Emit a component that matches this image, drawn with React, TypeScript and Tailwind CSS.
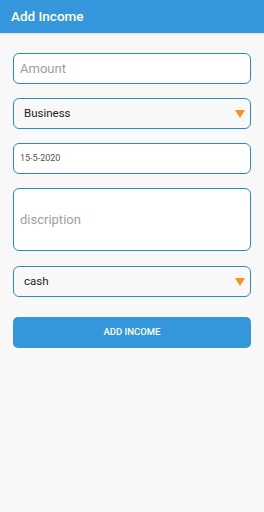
import React from "react";

function Triangle() {
  return (
    <svg width="10" height="8" viewBox="0 0 10 8" className="shrink-0">
      <polygon points="0,0 10,0 5,8" fill="#f7931e" />
    </svg>
  );
}

export default function App() {
  return (
    <div
      className="w-[264px] h-[512px] bg-[#f8f8f8] flex flex-col"
      style={{ fontFamily: "Roboto, 'Noto Sans', sans-serif" }}
    >
      <div className="h-[33px] bg-[#3497db] flex items-center px-[11px] shadow-[0_1px_2px_rgba(0,0,0,0.1)]">
        <span className="text-white text-[13.5px] font-medium">Add Income</span>
      </div>
      <div className="flex flex-col px-[13px] pt-[20px]">
        <div className="h-[31px] rounded-[6px] border-[1.5px] border-[#2a8cc4] bg-white flex items-center px-[6px]">
          <span className="text-[13px] text-[#9e9e9e]">Amount</span>
        </div>
        <div className="mt-[14px] h-[31px] rounded-[6px] border-[1.5px] border-[#2a8cc4] bg-[#f8f8f8] flex items-center pl-[10px] pr-[5px] justify-between">
          <span className="text-[11.5px] text-[#222]">Business</span>
          <Triangle />
        </div>
        <div className="mt-[14px] h-[31px] rounded-[6px] border-[1.5px] border-[#2a8cc4] bg-white flex items-center px-[6px]">
          <span className="text-[9px] text-[#555]">15-5-2020</span>
        </div>
        <div className="mt-[14px] h-[63px] rounded-[6px] border-[1.5px] border-[#2a8cc4] bg-white flex items-center px-[6px]">
          <span className="text-[13px] text-[#a0a0a0]">discription</span>
        </div>
        <div className="mt-[15px] h-[31px] rounded-[6px] border-[1.5px] border-[#2a8cc4] bg-[#f8f8f8] flex items-center pl-[10px] pr-[5px] justify-between">
          <span className="text-[11.5px] text-[#222]">cash</span>
          <Triangle />
        </div>
        <button className="mt-[20px] h-[31px] w-full rounded-[5px] bg-[#3497db] flex items-center justify-center">
          <span className="text-white text-[9.5px] font-medium">ADD INCOME</span>
        </button>
      </div>
    </div>
  );
}
